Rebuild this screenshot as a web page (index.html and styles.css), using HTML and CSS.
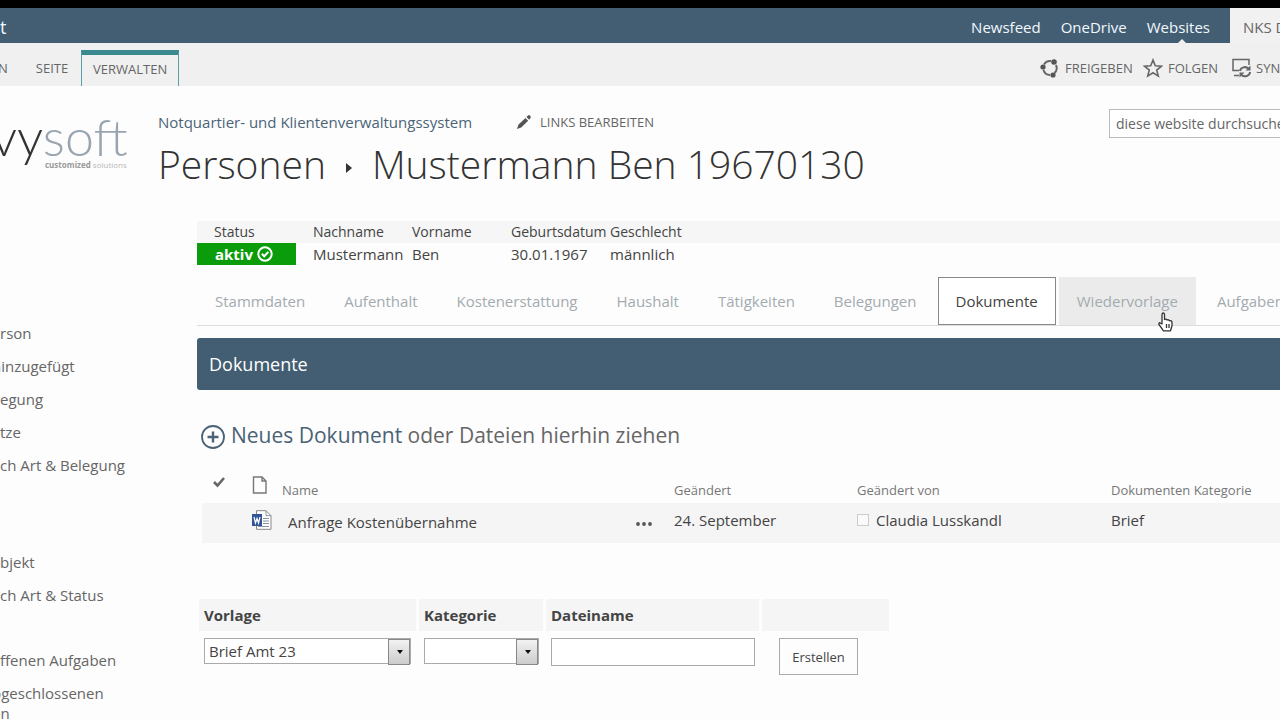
FILE: index.html
```html
<!DOCTYPE html>
<html lang="de">
<head>
<meta charset="utf-8">
<title>Personen - Mustermann Ben 19670130</title>
<link rel="stylesheet" href="styles.css">
</head>
<body>
<div class="suitebar">
  <span class="brand">t</span>
  <nav class="suite-links">
    <a href="#">Newsfeed</a>
    <a href="#">OneDrive</a>
    <a href="#" class="current">Websites</a>
  </nav>
  <button class="account">NKS D</button>
</div>
<div class="ribbon">
  <div class="ribbon-tabs">
    <button class="ribbon-tab cut">N</button>
    <button class="ribbon-tab">SEITE</button>
    <button class="ribbon-tab active">VERWALTEN</button>
  </div>
  <div class="actions">
    <button class="action share">
      <svg width="20" height="20" viewBox="0 0 20 20" fill="none" stroke="#666" stroke-width="2"><path d="M4 6.500A7 7 0 0 1 11 3M16 7A7 7 0 0 1 14.500 15M10 17A7 7 0 0 1 3.500 12"/><g fill="#555" stroke="none"><circle cx="14" cy="4" r="2.800"/><circle cx="13" cy="17" r="2.600"/><circle cx="3" cy="9" r="2.600"/></g></svg>
      FREIGEBEN</button>
    <button class="action follow">
      <svg width="20" height="20" viewBox="0 0 20 20" fill="none" stroke="#666" stroke-width="1.600"><path d="M10 2l2.300 5.700 6.200.4-4.800 4 1.600 6L10 14.800 4.700 18.100l1.600-6-4.800-4 6.200-.4z"/></svg>
      FOLGEN</button>
    <button class="action sync">
      <svg width="20" height="20" viewBox="0 0 20 20" fill="none" stroke="#666" stroke-width="1.500"><path d="M8 12.500H2V1.500h16V7M3 17.500h5"/><path stroke-width="2" d="M9 13a5 4.500 0 0 1 8.500-2.500M19 14a5 4.500 0 0 1-8.500 3"/><path fill="#666" stroke="none" d="M19.500 7.500v5h-5zM8.500 19.500v-5h5z"/></svg>
      SYN</button>
  </div>
</div>
<header class="header">
  <div class="logo"><div class="logo-name"><span class="logo-dark">vy</span><span class="logo-light">soft</span></div><div class="logo-sub"><b>customized</b> solutions</div></div>
  <div class="titles">
    <div class="toplinks">
      <a href="#" class="site">Notquartier- und Klientenverwaltungssystem</a>
      <button class="edit-links"><svg width="16" height="16" viewBox="0 0 16 16" fill="#555"><path d="M1 15l1.500-4.500L9.500 4l2.700 2.700-7 6.800zM10.500 3L12 1.500q1-.8 2 0t.7 2.200L13.200 5.700z"/></svg>LINKS BEARBEITEN</button>
    </div>
    <h1><span>Personen</span><svg width="6" height="10" viewBox="0 0 6 10" fill="#333"><path d="M0 0l6 5-6 5z"/></svg><span>Mustermann Ben 19670130</span></h1>
  </div>
  <input class="search" type="text" aria-label="Website durchsuchen" placeholder="diese website durchsuchen">
</header>
<div class="body">
  <nav class="sidebar">
    <a href="#">rson</a>
    <a href="#" class="tuck">hinzugefügt</a>
    <a href="#">egung</a>
    <a href="#">tze</a>
    <a href="#">ch Art &amp; Belegung</a>
    <a href="#" class="group">bjekt</a>
    <a href="#">ch Art &amp; Status</a>
    <a href="#" class="subgroup">ffenen Aufgaben</a>
    <a href="#" class="tuck">bgeschlossenen<br>en</a>
  </nav>
  <main>
    <table class="person">
      <thead><tr><th>Status</th><th>Nachname</th><th>Vorname</th><th>Geburtsdatum</th><th>Geschlecht</th><th></th></tr></thead>
      <tbody><tr><td class="status"><span>aktiv<svg width="16" height="16" viewBox="0 0 16 16" fill="none" stroke="#fff" stroke-width="2"><circle cx="8" cy="8" r="6.700"/><path d="M4.800 7.800l2.400 2.500 4.200-4.400"/></svg></span></td><td>Mustermann</td><td>Ben</td><td>30.01.1967</td><td>männlich</td><td></td></tr></tbody>
    </table>
    <div class="tabs">
      <button>Stammdaten</button>
      <button>Aufenthalt</button>
      <button>Kostenerstattung</button>
      <button>Haushalt</button>
      <button>Tätigkeiten</button>
      <button>Belegungen</button>
      <button class="selected">Dokumente</button>
      <button class="hovered">Wiedervorlage<svg class="cursor" width="16" height="20" viewBox="0 0 16 20"><path fill="#fff" stroke="#333" stroke-width="1.300" stroke-linejoin="round" d="M4 12V2.500Q4.200 1 5.200 1T6.500 2.500V7.500Q8.300 6.500 9 8q1.800-.8 2.400.8 2.300-.5 2.600 1.500v3.500l-1.500 5H5.500L1 12.500q-.5-1.500.8-1.800zM8.500 12v4M11 12v4"/></svg></button>
      <button>Aufgaben</button>
    </div>
    <h2 class="banner">Dokumente</h2>
    <div class="newdoc">
      <svg width="24" height="24" viewBox="0 0 24 24" fill="none" stroke="#4a6276"><circle cx="12" cy="12" r="11" stroke-width="1.800"/><path stroke-width="2.400" d="M12 6.500v11M6.500 12h11"/></svg>
      <span><a href="#">Neues Dokument</a> oder Dateien hierhin ziehen</span>
    </div>
    <table class="docs">
      <colgroup><col class="c-check"><col class="c-icon"><col class="c-name"><col class="c-more"><col class="c-date"><col class="c-author"><col></colgroup>
      <thead><tr>
        <th><svg width="14" height="12" viewBox="0 0 14 12" fill="none" stroke="#666" stroke-width="2.600"><path d="M2 6l3.500 3.500L12 2"/></svg></th>
        <th><svg width="16" height="18" viewBox="0 0 16 18" fill="none" stroke="#777" stroke-width="1.400"><path d="M1.500 1h8.500l4 4v12h-12.500zM10 1v4h4"/></svg></th>
        <th>Name</th><th></th><th>Geändert</th><th>Geändert von</th><th>Dokumenten Kategorie</th>
      </tr></thead>
      <tbody><tr>
        <td></td>
        <td><svg width="20" height="20" viewBox="0 0 20 20"><path d="M4.500.7H14l5 5V19.300H4.500z" fill="#fff" stroke="#888"/><path d="M14 .7v5h5M11 8.500h6M11 11h6M11 13.500h6M6 16.500h11" fill="none" stroke="#8792a2"/><path d="M0 4h10v12H0z" fill="#2f5597"/><path d="M2 7l1.500 6L5 8.500 6.500 13 8 7" fill="none" stroke="#fff" stroke-width="1.200"/></svg></td>
        <td class="name"><a href="#">Anfrage Kostenübernahme</a></td>
        <td><button class="more" aria-label="Mehr"><svg width="16" height="4" viewBox="0 0 16 4" fill="#555"><circle cx="2" cy="2" r="1.900"/><circle cx="8" cy="2" r="1.900"/><circle cx="14" cy="2" r="1.900"/></svg></button></td>
        <td>24. September</td>
        <td><span class="author"><i class="presence"></i>Claudia Lusskandl</span></td>
        <td>Brief</td>
      </tr></tbody>
    </table>
    <form class="create">
      <label for="vorlage">Vorlage</label>
      <label for="kategorie">Kategorie</label>
      <label for="dateiname">Dateiname</label>
      <span class="blank"></span>
      <div class="cell"><span class="drop"><select id="vorlage"><option>Brief Amt 23</option></select></span></div>
      <div class="cell"><span class="drop narrow"><select id="kategorie"><option></option></select></span></div>
      <div class="cell"><input id="dateiname" type="text"></div>
      <div class="cell last"><button type="button">Erstellen</button></div>
    </form>
  </main>
</div>
</body>
</html>
```
FILE: styles.css
```css
* { box-sizing: border-box; }
body { margin: 0; border-top: 8px solid #000; height: 100vh; overflow: hidden; background: #fdfdfd; color: #444; font: 15px/22px "Open Sans", "Noto Sans", sans-serif; }
a { color: inherit; text-decoration: none; }
button { font: inherit; color: inherit; background: none; border: 0; padding: 0; white-space: nowrap; }
table { border-collapse: collapse; table-layout: fixed; width: 100%; }
th, td { padding: 0; text-align: left; font-weight: 400; white-space: nowrap; }
svg { flex: none; }

.suitebar { display: flex; align-items: stretch; height: 35px; background: #435e72; color: #f2f8ff; font-size: 15px; line-height: 38px; }
.brand { flex: 1; font-size: 18px; }
.suite-links { display: flex; gap: 20px; padding-right: 20px; }
.current { position: relative; }
.current::after { content: ""; position: absolute; left: 50%; bottom: 0; border: 4px solid transparent; border-top: 0; border-bottom-color: #f1f1f1; }
.account { width: 50px; padding-left: 13px; overflow: hidden; background: #f1f1f1; color: #666; text-align: left; }

.ribbon { display: flex; justify-content: space-between; height: 43px; background: #f0f0f0; color: #666; font-size: 13px; }
.ribbon-tabs { display: flex; padding-top: 7px; }
.ribbon-tab { padding: 0 13px 0 16px; }
.ribbon-tab.cut { padding: 0 12px 0 0; margin-left: -2px; }
.ribbon-tab.active { width: 98px; padding: 0 0 4px; border: 1px solid #5ba0a8; border-top: 5px solid #3b8a90; border-bottom: 0; }
.actions { display: flex; padding-top: 7px; }
.action { display: flex; align-items: center; gap: 5px; overflow: hidden; }
.share { width: 103px; }
.follow { width: 88px; }
.sync { width: 49px; }

.header { display: flex; align-items: flex-start; height: 135px; }
.logo { width: 158px; padding-top: 20px; overflow: hidden; }
.logo-name { margin-left: -9px; height: 54px; font: 300 52px/60px Lato, sans-serif; white-space: nowrap; }
.logo-dark { color: #333; }
.logo-light { color: #98a5b0; }
.logo-sub { padding-left: 45px; font-size: 8px; line-height: 10px; color: #b8b8b8; white-space: nowrap; }
.logo-sub b { color: #999; }
.titles { flex: 1; padding-top: 24px; white-space: nowrap; }
.toplinks { display: flex; gap: 44px; line-height: 24px; }
.site { color: #4b6478; }
.edit-links { display: flex; align-items: center; gap: 8px; color: #666; font-size: 13px; }
h1 { display: flex; align-items: center; gap: 20px; margin: 0; color: #333; font-size: 39px; font-weight: 300; line-height: 60px; }
h1 svg { margin-top: 8px; }
.search { width: 171px; height: 29px; margin-top: 23px; padding: 0 0 0 6px; border: 1px solid #bbb; border-right: 0; background: #fff; color: #666; font: inherit; font-size: 14px; }
.search::placeholder { color: #666; opacity: 1; }

.body { display: grid; grid-template-columns: 197px minmax(0, 1fr); }
.sidebar { display: flex; flex-direction: column; gap: 13px; padding-top: 102px; color: #666; line-height: 20px; }
.sidebar .tuck { margin-left: -8px; }
.sidebar .group { margin-top: 64px; }
.sidebar .subgroup { margin-top: 32px; }

.person th { background: #f6f6f6; font-size: 14px; }
.person th, .person td { width: 99px; padding-left: 17px; }
.person th:last-child { width: auto; }
.person .status { padding: 0; color: #fff; font-weight: 700; background: #0a9c0a; }
.status span { display: flex; align-items: center; gap: 4px; padding-left: 18px; height: 21px; }

.tabs { display: flex; gap: 3px; height: 49px; margin-top: 12px; border-bottom: 1px solid #ddd; color: #a3abb0; }
.tabs button { flex: none; padding: 0 17px; border: 1px solid transparent; }
.tabs .selected { border-color: #888; background: #fff; color: #444; }
.tabs .hovered { position: relative; background: #ebebeb; }
.cursor { position: absolute; right: 21px; bottom: -8px; }

.banner { margin: 12px 0 0; padding-left: 12px; background: #435e72; border-radius: 3px 0 0 3px; color: #fff; font-size: 18px; font-weight: 400; line-height: 52px; }
.newdoc { display: flex; align-items: center; gap: 6px; margin-top: 29px; padding-left: 4px; color: #666; font-size: 21px; line-height: 32px; }
.newdoc svg { margin-top: 4px; }
.newdoc a { color: #4a6276; }

.docs { margin: 18px 0 0 5px; width: calc(100% - 5px); }
.docs th { height: 34px; color: #777; font-size: 13px; line-height: 26px; vertical-align: bottom; }
.docs th:first-child, .docs th:nth-child(2) { vertical-align: top; }
.docs th svg { display: block; margin-top: 7px; }
.docs th:first-child svg { margin-left: 10px; }
.docs td { height: 40px; padding-bottom: 6px; background: #f5f5f5; }
.docs td svg { display: block; }
.docs td.name { padding: 0 0 2px 6px; }
.docs .more { padding-top: 10px; }
.c-check { width: 50px; }
.c-icon { width: 30px; }
.c-name { width: 354px; }
.c-more { width: 38px; }
.c-date { width: 183px; }
.c-author { width: 254px; }
.author { display: flex; align-items: center; gap: 7px; }
.presence { width: 12px; height: 12px; border: 1px solid #ccc; background: #fafafa; }

.create { display: grid; grid-template-columns: 217px 124px 213px 127px; gap: 7px 3px; margin: 56px 0 0 2px; }
.create label, .blank { padding-left: 5px; background: #f5f5f5; font-weight: 700; line-height: 33px; height: 32px; }
.cell { padding-left: 5px; }
.drop { position: relative; display: block; width: 207px; }
.drop.narrow { width: 115px; }
select { appearance: none; display: block; width: 100%; height: 26px; padding: 0 4px; border: 1px solid #aaa; border-radius: 0; background: #fff; color: #444; font: inherit; }
.drop::before { content: ""; position: absolute; right: 1px; top: 1px; width: 20px; height: 24px; border: 1px solid #888; background: linear-gradient(#f2f2f2, #ccc); pointer-events: none; }
.drop::after { content: ""; position: absolute; right: 8px; top: 12px; border: 3px solid transparent; border-top: 4px solid #111; border-bottom: 0; pointer-events: none; }
.cell input { display: block; width: 204px; height: 28px; padding: 0 5px; border: 1px solid #aaa; background: #fff; font: inherit; }
.cell.last { padding-left: 17px; }
.cell button { width: 79px; height: 37px; border: 1px solid #aaa; background: #fdfdfd; font-size: 13px; }
```
